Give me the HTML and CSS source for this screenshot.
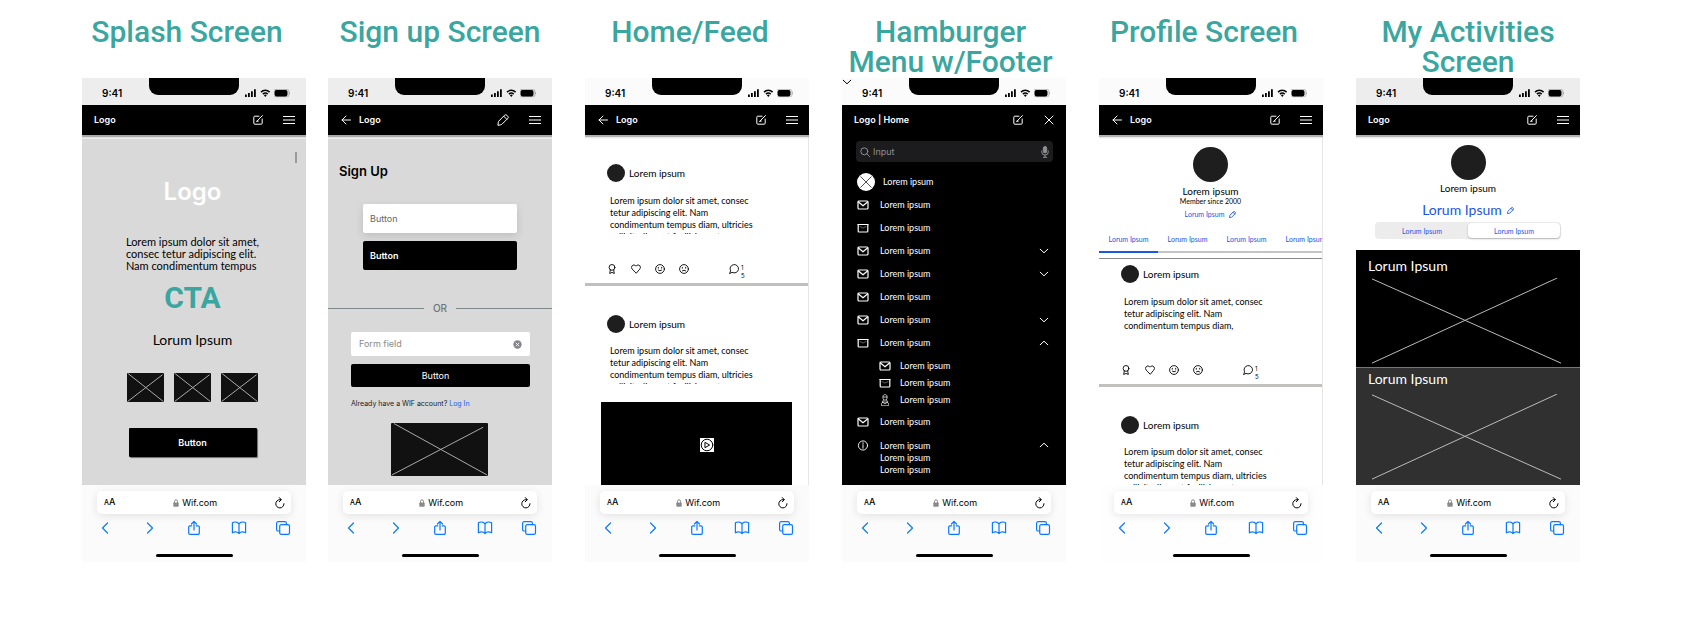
FILE: index.html
```html
<!DOCTYPE html>
<html lang="en">
<head>
<meta charset="utf-8">
<meta name="viewport" content="width=device-width, initial-scale=1">
<title>Wif.com screens</title>
<link rel="stylesheet" href="styles.css">
</head>
<body>
<svg class="sprite" aria-hidden="true">
  <symbol id="i-status" viewBox="0 0 45 10">
    <path fill="currentColor" d="M0 6.5h1.8V9H0zM3 5h1.8v4H3zM6 3.2h1.8V9H6zM9 1.2h1.8V9H9z"/>
    <path fill="none" stroke="currentColor" stroke-width="1.5" d="M16 4.1a6.2 6.2 0 0 1 8.6 0M17.9 6.1a3.5 3.5 0 0 1 4.8 0"/>
    <path fill="currentColor" d="M18.9 7.3a2 2 0 0 1 2.8 0L20.3 9z"/>
    <rect x="29.5" y="2" width="13" height="6.4" rx="1.8" fill="currentColor"/>
    <path fill="none" stroke="currentColor" stroke-opacity=".4" stroke-width=".6" d="M29.3 1.5h13a1.6 1.6 0 0 1 1.6 1.6v4a1.6 1.6 0 0 1-1.6 1.6h-13M44.5 4.3v1.8"/>
  </symbol>
  <symbol id="i-edit" viewBox="0 0 10 10"><path d="M6 1.2H1.8a1 1 0 0 0-1 1v6a1 1 0 0 0 1 1h6.400a1 1 0 0 0 1-1V4M3.800 6.300L9.400.6M3.800 6.300l1.500-.2"/></symbol>
  <symbol id="i-pencil" viewBox="0 0 12 12"><path d="M1 11l.3-2.800a2 2 0 0 1 .6-1.200L7.500 1.300a1.700 1.700 0 0 1 2.400 0l.8.8a1.700 1.700 0 0 1 0 2.400L5 10.200a2 2 0 0 1-1.200.6zM6.700 2.200l3.100 3.100"/></symbol>
  <symbol id="i-menu" viewBox="0 0 12 10"><path d="M0 1.500h12M0 5h12M0 8.500h12"/></symbol>
  <symbol id="i-close" viewBox="0 0 10 10"><path d="M1 1l8 8M9 1L1 9"/></symbol>
  <symbol id="i-arrow" viewBox="0 0 10 10"><path d="M9.500 5H1M5 1L1 5l4 4"/></symbol>
  <symbol id="i-down" viewBox="0 0 10 10"><path d="M1.200 3.200L5 6.800l3.800-3.600"/></symbol>
  <symbol id="i-up" viewBox="0 0 10 10"><path d="M1.200 6.800L5 3.200l3.800 3.600"/></symbol>
  <symbol id="i-mail" viewBox="0 0 12 10"><rect x="1" y="1" width="10" height="8" rx="1"/><path d="M1.500 2L6 5.800 10.500 2"/></symbol>
  <symbol id="i-box" viewBox="0 0 12 10"><path d="M.8 1.500h10.400M1.200 2v6.200a.8.8 0 0 0 .8.8h8a.8.8 0 0 0 .8-.8V2"/><path stroke-opacity=".3" d="M3 3.500L6 5l3-1.500"/></symbol>
  <symbol id="i-person" viewBox="0 0 10 12"><path d="M3 2.200C3 1.300 3.900.6 5 .6s2 .7 2 1.600v2C7 5.300 6.100 6.200 5 6.200S3 5.300 3 4.200zM3 3h4M3.600 5.800L2.500 8M6.400 5.800L7.500 8M2.500 8l5 .2M1.500 11.400C1 9.500 2 8.500 3 8.300L5 10l2-1.700c1 .2 2 1.200 1.500 3.100z"/></symbol>
  <symbol id="i-info" viewBox="0 0 12 12"><circle cx="6" cy="6" r="5"/><path d="M6 5.300V9M6 3v1.200"/></symbol>
  <symbol id="i-search" viewBox="0 0 10 10"><circle cx="4.300" cy="4.300" r="3.500"/><path d="M6.900 6.900l2.700 2.700"/></symbol>
  <symbol id="i-mic" viewBox="0 0 8 12"><rect x="2.300" y=".5" width="3.400" height="6.500" rx="1.700" fill="currentColor"/><path d="M.7 5v.8a3.300 3.300 0 0 0 6.600 0V5M4 9.200v2M2.300 11.300h3.400"/></symbol>
  <symbol id="i-award" viewBox="0 0 10 10"><circle cx="5" cy="3.400" r="2.900"/><path d="M3.300 5.900L2.700 9.500 5 8.400l2.300 1.100-.6-3.600"/></symbol>
  <symbol id="i-heart" viewBox="0 0 10 10"><path d="M5 9L1.200 5.100a2.400 2.400 0 0 1 0-3.400 2.400 2.400 0 0 1 3.400 0L5 2.100l.4-.4a2.400 2.400 0 0 1 3.400 0 2.400 2.400 0 0 1 0 3.400z"/></symbol>
  <symbol id="i-smile" viewBox="0 0 10 10"><circle cx="5" cy="5" r="4.400"/><path d="M3.200 6a2.300 2.300 0 0 0 3.600 0M3.300 3.300v.9M6.700 3.300v.9"/></symbol>
  <symbol id="i-frown" viewBox="0 0 10 10"><circle cx="5" cy="5" r="4.400"/><path d="M3.200 7a2.300 2.300 0 0 1 3.600 0M3.300 3.300v.9M6.700 3.300v.9"/></symbol>
  <symbol id="i-chat" viewBox="0 0 10 10"><path d="M.7 9.300l.9-2.500a4.200 4.200 0 1 1 1.700 1.700z"/></symbol>
  <symbol id="i-play" viewBox="0 0 14 14"><circle cx="7" cy="7" r="5.800"/><path d="M5.300 4.500L9.600 7 5.300 9.500z"/></symbol>
  <symbol id="i-lock" viewBox="0 0 6 8"><rect x=".3" y="3.500" width="5.400" height="4.300" rx=".8" fill="currentColor" stroke="none"/><path d="M1.500 3.800V2.300a1.500 1.500 0 0 1 3 0v1.500"/></symbol>
  <symbol id="i-reload" viewBox="0 0 10 12"><path d="M9 6.700A4.100 4.100 0 1 1 5 2.700h1M4.300.6l2 2.100-2 2.100"/></symbol>
  <symbol id="i-back" viewBox="0 0 16 16"><path d="M10.500 3L5.500 8l5 5"/></symbol>
  <symbol id="i-forward" viewBox="0 0 16 16"><path d="M5.500 3l5 5-5 5"/></symbol>
  <symbol id="i-share" viewBox="0 0 16 16"><path d="M5.800 5.800H4a1.300 1.300 0 0 0-1.300 1.300v6A1.300 1.300 0 0 0 4 14.400h8a1.300 1.300 0 0 0 1.300-1.300v-6A1.300 1.300 0 0 0 12 5.800h-1.800M8 10V1.600M5.400 4L8 1.400 10.600 4"/></symbol>
  <symbol id="i-book" viewBox="0 0 16 16"><path d="M8 3.800C6.500 2 3.500 1.700 1.400 2.800v10c2.100-1 5.100-.9 6.600.7 1.500-1.600 4.500-1.700 6.600-.7v-10C12.500 1.700 9.500 2 8 3.800zM8 3.800v9.700"/></symbol>
  <symbol id="i-tabs" viewBox="0 0 16 16"><rect x="4.700" y="4.700" width="9.800" height="9.600" rx="1.600"/><path d="M4.700 11H3.200a1.600 1.600 0 0 1-1.600-1.600V3.200a1.600 1.600 0 0 1 1.600-1.600h6.600a1.600 1.600 0 0 1 1.600 1.600v1.500"/></symbol>
  <symbol id="i-clear" viewBox="0 0 10 10"><circle cx="5" cy="5" r="4.600" fill="currentColor" stroke="none"/><path stroke="#fff" d="M3.400 3.400l3.200 3.200M6.600 3.400L3.400 6.600"/></symbol>
</svg>

<main class="board">

  <section class="screen screen--first">
    <h1 class="screen__title screen__title--left">Splash Screen</h1>
    <div class="phone">
      <div class="status status--gray"><span>9:41</span><i class="notch"></i><svg class="status__icons"><use href="#i-status"/></svg></div>
      <header class="nav">
        <span class="nav__name">Logo</span>
        <button class="icon-btn" aria-label="Compose"><svg class="icon"><use href="#i-edit"/></svg></button>
        <button class="icon-btn" aria-label="Menu"><svg class="icon icon--menu"><use href="#i-menu"/></svg></button>
      </header>
      <div class="view view--gray splash">
        <i class="scrollbar"></i>
        <p class="splash__logo">Logo</p>
        <p class="splash__text hand">Lorem ipsum dolor sit amet,<br>consec tetur adipiscing elit.<br>Nam condimentum tempus</p>
        <p class="splash__cta">CTA</p>
        <p class="splash__sub hand">Lorum Ipsum</p>
        <div class="splash__pics">
          <svg class="pic" viewBox="0 0 100 100" preserveAspectRatio="none"><path d="M3 2L98 98M2 98L96 6"/></svg>
          <svg class="pic" viewBox="0 0 100 100" preserveAspectRatio="none"><path d="M3 2L98 98M2 98L96 6"/></svg>
          <svg class="pic" viewBox="0 0 100 100" preserveAspectRatio="none"><path d="M3 2L98 98M2 98L96 6"/></svg>
        </div>
        <button class="btn btn--square">Button</button>
      </div>
      <footer class="browser">
        <div class="address"><button class="address__aa" aria-label="Text size"><small>A</small>A</button><span class="address__url"><svg class="icon icon--lock"><use href="#i-lock"/></svg>Wif.com</span><button class="icon-btn" aria-label="Reload"><svg class="icon icon--reload"><use href="#i-reload"/></svg></button></div>
        <div class="tools"><button class="icon-btn" aria-label="Back"><svg class="icon icon--tool"><use href="#i-back"/></svg></button><button class="icon-btn" aria-label="Forward"><svg class="icon icon--tool"><use href="#i-forward"/></svg></button><button class="icon-btn" aria-label="Share"><svg class="icon icon--tool"><use href="#i-share"/></svg></button><button class="icon-btn" aria-label="Bookmarks"><svg class="icon icon--tool"><use href="#i-book"/></svg></button><button class="icon-btn" aria-label="Tabs"><svg class="icon icon--tool"><use href="#i-tabs"/></svg></button></div>
        <i class="home-bar"></i>
      </footer>
    </div>
  </section>

  <section class="screen">
    <h1 class="screen__title">Sign up Screen</h1>
    <div class="phone">
      <div class="status status--gray"><span>9:41</span><i class="notch"></i><svg class="status__icons"><use href="#i-status"/></svg></div>
      <header class="nav">
        <button class="icon-btn nav__back" aria-label="Go back"><svg class="icon"><use href="#i-arrow"/></svg></button>
        <span class="nav__name">Logo</span>
        <button class="icon-btn" aria-label="Edit"><svg class="icon icon--pencil"><use href="#i-pencil"/></svg></button>
        <button class="icon-btn" aria-label="Menu"><svg class="icon icon--menu"><use href="#i-menu"/></svg></button>
      </header>
      <div class="view view--gray signup">
        <h2 class="signup__title">Sign Up</h2>
        <div class="signup__choices">
          <button class="btn btn--left btn--light">Button</button>
          <button class="btn btn--left">Button</button>
        </div>
        <div class="or"><span>OR</span></div>
        <form class="signup__form">
          <div class="field"><input type="text" placeholder="Form field" aria-label="Form field"><button type="button" class="icon-btn" aria-label="Clear"><svg class="icon icon--clear"><use href="#i-clear"/></svg></button></div>
          <button type="button" class="btn btn--wide">Button</button>
          <p class="signup__note">Already have a WIF account? <a href="#login">Log In</a></p>
        </form>
        <svg class="pic pic--large" viewBox="0 0 100 100" preserveAspectRatio="none"><path d="M3 1L99 98M1 98L95 8"/></svg>
      </div>
      <footer class="browser">
        <div class="address"><button class="address__aa" aria-label="Text size"><small>A</small>A</button><span class="address__url"><svg class="icon icon--lock"><use href="#i-lock"/></svg>Wif.com</span><button class="icon-btn" aria-label="Reload"><svg class="icon icon--reload"><use href="#i-reload"/></svg></button></div>
        <div class="tools"><button class="icon-btn" aria-label="Back"><svg class="icon icon--tool"><use href="#i-back"/></svg></button><button class="icon-btn" aria-label="Forward"><svg class="icon icon--tool"><use href="#i-forward"/></svg></button><button class="icon-btn" aria-label="Share"><svg class="icon icon--tool"><use href="#i-share"/></svg></button><button class="icon-btn" aria-label="Bookmarks"><svg class="icon icon--tool"><use href="#i-book"/></svg></button><button class="icon-btn" aria-label="Tabs"><svg class="icon icon--tool"><use href="#i-tabs"/></svg></button></div>
        <i class="home-bar"></i>
      </footer>
    </div>
  </section>

  <section class="screen">
    <h1 class="screen__title screen__title--left">Home/Feed</h1>
    <div class="phone">
      <div class="status"><span>9:41</span><i class="notch"></i><svg class="status__icons"><use href="#i-status"/></svg></div>
      <header class="nav">
        <button class="icon-btn nav__back" aria-label="Go back"><svg class="icon"><use href="#i-arrow"/></svg></button>
        <span class="nav__name">Logo</span>
        <button class="icon-btn" aria-label="Compose"><svg class="icon"><use href="#i-edit"/></svg></button>
        <button class="icon-btn" aria-label="Menu"><svg class="icon icon--menu"><use href="#i-menu"/></svg></button>
      </header>
      <div class="view view--edge hand">
        <article class="post post--roomy">
          <div class="post__author"><i class="avatar"></i>Lorem ipsum</div>
          <p class="post__text">Lorem ipsum dolor sit amet, consec<br>tetur adipiscing elit. Nam<br>condimentum tempus diam, ultricies<br>sollicitudin erat facilisis eget</p>
          <div class="reactions">
            <button class="icon-btn" aria-label="Award"><svg class="icon"><use href="#i-award"/></svg></button>
            <button class="icon-btn" aria-label="Love"><svg class="icon"><use href="#i-heart"/></svg></button>
            <button class="icon-btn" aria-label="Happy"><svg class="icon"><use href="#i-smile"/></svg></button>
            <button class="icon-btn" aria-label="Sad"><svg class="icon"><use href="#i-frown"/></svg></button>
            <button class="icon-btn reactions__chat" aria-label="Comments"><svg class="icon"><use href="#i-chat"/></svg></button>
            <span class="reactions__count">1<br>5</span>
          </div>
        </article>
        <article class="post post--next">
          <div class="post__author"><i class="avatar"></i>Lorem ipsum</div>
          <p class="post__text">Lorem ipsum dolor sit amet, consec<br>tetur adipiscing elit. Nam<br>condimentum tempus diam, ultricies<br>sollicitudin erat facilisis eget</p>
        </article>
        <div class="video"><button class="video__play" aria-label="Play"><svg class="icon icon--play"><use href="#i-play"/></svg></button></div>
      </div>
      <footer class="browser">
        <div class="address"><button class="address__aa" aria-label="Text size"><small>A</small>A</button><span class="address__url"><svg class="icon icon--lock"><use href="#i-lock"/></svg>Wif.com</span><button class="icon-btn" aria-label="Reload"><svg class="icon icon--reload"><use href="#i-reload"/></svg></button></div>
        <div class="tools"><button class="icon-btn" aria-label="Back"><svg class="icon icon--tool"><use href="#i-back"/></svg></button><button class="icon-btn" aria-label="Forward"><svg class="icon icon--tool"><use href="#i-forward"/></svg></button><button class="icon-btn" aria-label="Share"><svg class="icon icon--tool"><use href="#i-share"/></svg></button><button class="icon-btn" aria-label="Bookmarks"><svg class="icon icon--tool"><use href="#i-book"/></svg></button><button class="icon-btn" aria-label="Tabs"><svg class="icon icon--tool"><use href="#i-tabs"/></svg></button></div>
        <i class="home-bar"></i>
      </footer>
    </div>
  </section>

  <section class="screen">
    <h1 class="screen__title screen__title--wide">Hamburger<br>Menu w/Footer</h1>
    <div class="phone">
      <div class="status"><svg class="icon status__corner"><use href="#i-down"/></svg><span>9:41</span><i class="notch"></i><svg class="status__icons"><use href="#i-status"/></svg></div>
      <header class="nav nav--flat">
        <span class="nav__name">Logo | Home</span>
        <button class="icon-btn" aria-label="Compose"><svg class="icon"><use href="#i-edit"/></svg></button>
        <button class="icon-btn" aria-label="Close"><svg class="icon icon--menu"><use href="#i-close"/></svg></button>
      </header>
      <div class="view view--black menu">
        <div class="search"><svg class="icon"><use href="#i-search"/></svg><input type="text" placeholder="Input" aria-label="Search"><button class="icon-btn" aria-label="Dictate"><svg class="icon icon--mic"><use href="#i-mic"/></svg></button></div>
        <ul class="menu__list hand">
          <li class="menu__row menu__row--user"><svg class="menu__avatar" viewBox="0 0 18 18"><circle cx="9" cy="9" r="9" fill="#fff"/><path d="M3.500 3.500l11 11M14.500 3.500l-11 11" stroke="#222" stroke-width=".8"/></svg><a href="#user">Lorem ipsum</a></li>
          <li class="menu__row"><svg class="icon icon--item"><use href="#i-mail"/></svg><a href="#m1">Lorem ipsum</a></li>
          <li class="menu__row"><svg class="icon icon--item"><use href="#i-box"/></svg><a href="#m2">Lorem ipsum</a></li>
          <li class="menu__row"><svg class="icon icon--item"><use href="#i-mail"/></svg><a href="#m3">Lorem ipsum</a><button class="icon-btn" aria-label="Expand"><svg class="icon"><use href="#i-down"/></svg></button></li>
          <li class="menu__row"><svg class="icon icon--item"><use href="#i-mail"/></svg><a href="#m4">Lorem ipsum</a><button class="icon-btn" aria-label="Expand"><svg class="icon"><use href="#i-down"/></svg></button></li>
          <li class="menu__row"><svg class="icon icon--item"><use href="#i-mail"/></svg><a href="#m5">Lorem ipsum</a></li>
          <li class="menu__row"><svg class="icon icon--item"><use href="#i-mail"/></svg><a href="#m6">Lorem ipsum</a><button class="icon-btn" aria-label="Expand"><svg class="icon"><use href="#i-down"/></svg></button></li>
          <li class="menu__row"><svg class="icon icon--item"><use href="#i-box"/></svg><a href="#m7">Lorem ipsum</a><button class="icon-btn" aria-label="Collapse"><svg class="icon"><use href="#i-up"/></svg></button></li>
          <li>
            <ul class="submenu">
              <li><svg class="icon icon--item"><use href="#i-mail"/></svg><a href="#s1">Lorem ipsum</a></li>
              <li><svg class="icon icon--item"><use href="#i-box"/></svg><a href="#s2">Lorem ipsum</a></li>
              <li><svg class="icon icon--item icon--person"><use href="#i-person"/></svg><a href="#s3">Lorem ipsum</a></li>
            </ul>
          </li>
          <li class="menu__row"><svg class="icon icon--item"><use href="#i-mail"/></svg><a href="#m8">Lorem ipsum</a></li>
          <li class="menu__row menu__row--last"><svg class="icon icon--item icon--info"><use href="#i-info"/></svg><a href="#m9">Lorem ipsum<br>Lorem ipsum<br>Lorem ipsum</a><button class="icon-btn" aria-label="Collapse"><svg class="icon"><use href="#i-up"/></svg></button></li>
        </ul>
      </div>
      <footer class="browser">
        <div class="address"><button class="address__aa" aria-label="Text size"><small>A</small>A</button><span class="address__url"><svg class="icon icon--lock"><use href="#i-lock"/></svg>Wif.com</span><button class="icon-btn" aria-label="Reload"><svg class="icon icon--reload"><use href="#i-reload"/></svg></button></div>
        <div class="tools"><button class="icon-btn" aria-label="Back"><svg class="icon icon--tool"><use href="#i-back"/></svg></button><button class="icon-btn" aria-label="Forward"><svg class="icon icon--tool"><use href="#i-forward"/></svg></button><button class="icon-btn" aria-label="Share"><svg class="icon icon--tool"><use href="#i-share"/></svg></button><button class="icon-btn" aria-label="Bookmarks"><svg class="icon icon--tool"><use href="#i-book"/></svg></button><button class="icon-btn" aria-label="Tabs"><svg class="icon icon--tool"><use href="#i-tabs"/></svg></button></div>
        <i class="home-bar"></i>
      </footer>
    </div>
  </section>

  <section class="screen">
    <h1 class="screen__title screen__title--left">Profile Screen</h1>
    <div class="phone">
      <div class="status"><span>9:41</span><i class="notch"></i><svg class="status__icons"><use href="#i-status"/></svg></div>
      <header class="nav">
        <button class="icon-btn nav__back" aria-label="Go back"><svg class="icon"><use href="#i-arrow"/></svg></button>
        <span class="nav__name">Logo</span>
        <button class="icon-btn" aria-label="Compose"><svg class="icon"><use href="#i-edit"/></svg></button>
        <button class="icon-btn" aria-label="Menu"><svg class="icon icon--menu"><use href="#i-menu"/></svg></button>
      </header>
      <div class="view view--edge hand">
        <div class="person">
          <i class="avatar avatar--large"></i>
          <p class="person__name">Lorem ipsum</p>
          <p class="person__since">Member since 2000</p>
          <a class="person__link" href="#edit">Lorum Ipsum<svg class="icon icon--small"><use href="#i-pencil"/></svg></a>
        </div>
        <nav class="tabs"><a class="tabs__item tabs__item--on" href="#t1">Lorum Ipsum</a><a class="tabs__item" href="#t2">Lorum Ipsum</a><a class="tabs__item" href="#t3">Lorum Ipsum</a><a class="tabs__item" href="#t4">Lorum Ipsum</a></nav>
        <article class="post post--ruled">
          <div class="post__author"><i class="avatar"></i>Lorem ipsum</div>
          <p class="post__text">Lorem ipsum dolor sit amet, consec<br>tetur adipiscing elit. Nam<br>condimentum tempus diam,</p>
          <div class="reactions">
            <button class="icon-btn" aria-label="Award"><svg class="icon"><use href="#i-award"/></svg></button>
            <button class="icon-btn" aria-label="Love"><svg class="icon"><use href="#i-heart"/></svg></button>
            <button class="icon-btn" aria-label="Happy"><svg class="icon"><use href="#i-smile"/></svg></button>
            <button class="icon-btn" aria-label="Sad"><svg class="icon"><use href="#i-frown"/></svg></button>
            <button class="icon-btn reactions__chat" aria-label="Comments"><svg class="icon"><use href="#i-chat"/></svg></button>
            <span class="reactions__count">1<br>5</span>
          </div>
        </article>
        <article class="post post--next">
          <div class="post__author"><i class="avatar"></i>Lorem ipsum</div>
          <p class="post__text">Lorem ipsum dolor sit amet, consec<br>tetur adipiscing elit. Nam<br>condimentum tempus diam, ultricies<br>sollicitudin erat facilisis eget</p>
        </article>
      </div>
      <footer class="browser browser--white">
        <div class="address"><button class="address__aa" aria-label="Text size"><small>A</small>A</button><span class="address__url"><svg class="icon icon--lock"><use href="#i-lock"/></svg>Wif.com</span><button class="icon-btn" aria-label="Reload"><svg class="icon icon--reload"><use href="#i-reload"/></svg></button></div>
        <div class="tools"><button class="icon-btn" aria-label="Back"><svg class="icon icon--tool"><use href="#i-back"/></svg></button><button class="icon-btn" aria-label="Forward"><svg class="icon icon--tool"><use href="#i-forward"/></svg></button><button class="icon-btn" aria-label="Share"><svg class="icon icon--tool"><use href="#i-share"/></svg></button><button class="icon-btn" aria-label="Bookmarks"><svg class="icon icon--tool"><use href="#i-book"/></svg></button><button class="icon-btn" aria-label="Tabs"><svg class="icon icon--tool"><use href="#i-tabs"/></svg></button></div>
        <i class="home-bar"></i>
      </footer>
    </div>
  </section>

  <section class="screen">
    <h1 class="screen__title">My Activities<br>Screen</h1>
    <div class="phone">
      <div class="status status--gray"><span>9:41</span><i class="notch"></i><svg class="status__icons"><use href="#i-status"/></svg></div>
      <header class="nav">
        <span class="nav__name">Logo</span>
        <button class="icon-btn" aria-label="Compose"><svg class="icon"><use href="#i-edit"/></svg></button>
        <button class="icon-btn" aria-label="Menu"><svg class="icon icon--menu"><use href="#i-menu"/></svg></button>
      </header>
      <div class="view hand">
        <div class="person person--compact">
          <i class="avatar avatar--large"></i>
          <p class="person__name">Lorem ipsum</p>
          <a class="person__link person__link--large" href="#edit">Lorum Ipsum<svg class="icon icon--small"><use href="#i-pencil"/></svg></a>
        </div>
        <div class="segments"><button class="segments__item">Lorum Ipsum</button><button class="segments__item segments__item--on">Lorum Ipsum</button></div>
        <div class="tile">
          <h2 class="tile__title">Lorum Ipsum</h2>
          <svg class="tile__cross" viewBox="0 0 100 100" preserveAspectRatio="none"><path d="M0 1L100 99M0 99L98 0"/></svg>
        </div>
        <div class="tile tile--gray">
          <h2 class="tile__title">Lorum Ipsum</h2>
          <svg class="tile__cross" viewBox="0 0 100 100" preserveAspectRatio="none"><path d="M0 1L100 99M0 99L98 0"/></svg>
        </div>
      </div>
      <footer class="browser">
        <div class="address"><button class="address__aa" aria-label="Text size"><small>A</small>A</button><span class="address__url"><svg class="icon icon--lock"><use href="#i-lock"/></svg>Wif.com</span><button class="icon-btn" aria-label="Reload"><svg class="icon icon--reload"><use href="#i-reload"/></svg></button></div>
        <div class="tools"><button class="icon-btn" aria-label="Back"><svg class="icon icon--tool"><use href="#i-back"/></svg></button><button class="icon-btn" aria-label="Forward"><svg class="icon icon--tool"><use href="#i-forward"/></svg></button><button class="icon-btn" aria-label="Share"><svg class="icon icon--tool"><use href="#i-share"/></svg></button><button class="icon-btn" aria-label="Bookmarks"><svg class="icon icon--tool"><use href="#i-book"/></svg></button><button class="icon-btn" aria-label="Tabs"><svg class="icon icon--tool"><use href="#i-tabs"/></svg></button></div>
        <i class="home-bar"></i>
      </footer>
    </div>
  </section>

</main>
</body>
</html>
```
FILE: styles.css
```css
* { box-sizing: border-box; margin: 0; padding: 0; }

body {
  background: #fff;
  color: #000;
  font: 9px/12px Inter, "Liberation Sans", sans-serif;
}

button, input { font: inherit; color: inherit; background: none; border: 0; }
a { color: inherit; text-decoration: none; }
ul { list-style: none; }
.sprite { position: absolute; width: 0; height: 0; }
.hand { font-family: Lato, "Open Sans", sans-serif; }

.icon {
  display: block;
  flex: none;
  width: 10px;
  height: 10px;
  fill: none;
  stroke: currentColor;
  stroke-linecap: round;
  stroke-linejoin: round;
}
.icon-btn { display: flex; align-items: center; justify-content: center; }
.icon--menu { width: 12px; }
.icon--pencil { width: 12px; height: 12px; }
.icon--small { width: 7px; height: 7px; stroke-width: 1.5; }
.icon--lock { width: 6px; height: 8px; color: #8a8a8e; }
.icon--reload { width: 10px; height: 12px; }
.icon--tool { width: 16px; height: 16px; stroke-width: 1.2; }
.icon--clear { width: 9px; height: 9px; color: #85858b; }
.icon--mic { width: 8px; height: 12px; }
.icon--play { width: 14px; height: 14px; }

/* Board */
.board { display: flex; gap: 33px; padding: 17px 106px 17px 82px; }
.screen { flex: 1; min-width: 0; display: flex; flex-direction: column; }
.screen--first { margin-right: -11px; }
.screen__title {
  min-height: 61px;
  color: #3aa6a0;
  font: 500 30px/30px Roboto, sans-serif;
  text-align: center;
  white-space: nowrap;
}
.screen__title--left { padding-right: 14px; }
.screen__title--wide { padding-right: 7px; }
.phone { flex: 1; display: flex; flex-direction: column; overflow: hidden; }

/* Status bar */
.status {
  position: relative;
  display: flex;
  justify-content: space-between;
  align-items: center;
  height: 27px;
  padding: 3px 16px 0 20px;
  background: #fbfbfb;
  font-size: 10px;
  font-weight: 600;
}
.status--gray { background: #ededed; }
.status__icons { width: 45px; height: 10px; }
.status__corner { position: absolute; left: 0; top: -1px; }
.notch {
  position: absolute;
  top: 0;
  left: 50%;
  width: 90px;
  height: 17px;
  margin-left: -45px;
  border-radius: 0 0 9px 9px;
  background: #000;
}

/* App bar */
.nav {
  position: relative;
  z-index: 1;
  display: flex;
  align-items: center;
  gap: 20px;
  height: 30px;
  padding: 0 11px 0 12px;
  background: #000;
  color: #fff;
  font-weight: 600;
  box-shadow: 0 2px 1px rgba(0, 0, 0, .28);
}
.nav--flat { box-shadow: none; }
.nav__name { flex: 1; }
.nav__back { margin: 0 -12px 0 1px; }

.view { position: relative; flex: 1; border-top: 4px solid #f6f5f5; background: #fff; }
.view--gray { border-top-color: #ececec; background: #d9d9d9; }
.view--black { border-top: 0; background: #000; color: #fff; }
.view--edge { border-right: 1px solid #e6e6e6; }

/* Buttons and image placeholders */
.btn {
  height: 29px;
  border-radius: 2px;
  background: #000;
  color: #fff;
  font-weight: 600;
  text-align: center;
}
.btn--square { width: 128px; border-radius: 1px; box-shadow: 1px 1px 1px rgba(0, 0, 0, .5); }
.btn--left { width: 100%; padding-left: 7px; text-align: left; }
.btn--light { background: #fff; color: #666; font-weight: 400; box-shadow: 0 3px 8px rgba(0, 0, 0, .12); }
.btn--wide { width: 100%; height: 23px; padding-right: 10px; font-weight: 400; }
.pic { width: 37px; height: 29px; background: #111; border-radius: 1px; fill: none; stroke: #aaa; }
.pic path, .tile__cross path { vector-effect: non-scaling-stroke; }
.pic--large { display: block; width: 97px; height: 53px; margin: 14px auto 0 63px; }

/* Splash */
.splash { display: flex; flex-direction: column; align-items: center; padding: 39px 3px 28px 0; }
.scrollbar { position: absolute; top: 13px; right: 9px; width: 2px; height: 11px; background: #9a9a9a; }
.splash__logo { color: #fff; font-size: 24px; line-height: 28px; font-weight: 600; }
.splash__text { margin-top: 30px; font-size: 11px; }
.splash__cta { margin-top: 11px; color: #3aa6a0; font: 700 30px/30px Roboto, sans-serif; }
.splash__sub { margin: 18px 0 24px; font-size: 14px; line-height: 18px; }
.splash__pics { display: flex; gap: 10px; margin-bottom: 26px; }

/* Sign up */
.signup { padding: 24px 0 9px; }
.signup__title { padding-left: 11px; font-size: 13px; line-height: 16px; font-weight: 600; }
.signup__choices { display: grid; gap: 8px; padding: 25px 35px 32px; }
.or { display: flex; align-items: center; gap: 9px; color: #6b777b; font-size: 10px; font-weight: 500; }
.or::before, .or::after { content: ""; flex: 1; height: 1px; background: #808a8d; }
.signup__form { padding: 18px 22px 0 23px; }
.field {
  display: flex;
  align-items: center;
  height: 24px;
  margin-bottom: 8px;
  padding: 0 8px;
  border-radius: 2px;
  background: #fff;
  color: #8a8a8a;
}
.field input, .search input { flex: 1; min-width: 0; outline: 0; }
::placeholder { color: inherit; opacity: 1; }
.signup__note { margin-top: 12px; font-size: 7px; line-height: 10px; color: #222; }
.signup__note a { color: #2460e8; }

/* Posts */
.post { padding: 6px 21px 3px 22px; border-bottom: 3px solid #c2bfbf; }
.post--roomy { padding-top: 25px; }
.post--ruled { margin-top: 5px; border-top: 1px solid #888; }
.post--next { padding-top: 29px; padding-bottom: 0; border-bottom: 0; }
.post__author { display: flex; align-items: center; gap: 4px; margin-bottom: 13px; font-size: 10px; }
.post--next .post__author { margin-bottom: 12px; }
.avatar { flex: none; width: 18px; height: 18px; border-radius: 50%; background: #1e1e1e; }
.avatar--large { width: 35px; height: 35px; }
.post__text { height: 39px; padding-left: 3px; overflow: hidden; white-space: nowrap; }
.reactions { display: flex; align-items: flex-start; gap: 14px; margin-top: 30px; }
.reactions .icon { stroke-width: .9; }
.reactions__chat { margin-left: 26px; }
.reactions__count { margin-left: -12px; font: 6px/8px Inter, sans-serif; }
.video { position: relative; height: 83px; margin: 18px 16px 0; background: #000; }
.video__play { position: absolute; left: 52%; top: 43%; background: #fff; color: #000; }

/* Menu */
.menu { padding: 6px 13px 9px 14px; }
.search {
  display: flex;
  align-items: center;
  gap: 3px;
  height: 21px;
  padding: 0 4px;
  border-radius: 4px;
  background: #1c1c1e;
  color: #8e8e93;
}
.menu__list { padding-top: 8px; }
.menu__row { display: flex; align-items: center; gap: 11px; height: 23px; padding: 0 4px 0 1px; }
.menu__row a { flex: 1; }
.menu__row--user { gap: 8px; }
.menu__row--last { align-items: flex-start; height: auto; padding-top: 7px; }
.menu__avatar { width: 18px; height: 18px; }
.icon--item { width: 12px; height: 10px; stroke-width: 1.2; }
.icon--info { height: 11px; stroke-width: 1; }
.submenu { padding: 3px 0 2px 23px; }
.submenu li { display: flex; align-items: center; gap: 9px; height: 17px; }
.icon--person { height: 12px; stroke-width: .7; }

/* Profile header */
.person { display: flex; flex-direction: column; align-items: center; padding: 8px 0 15px; }
.person__name { margin-top: 3px; font-size: 10px; }
.person__since { margin-bottom: 4px; font-size: 7px; line-height: 8px; }
.person__link { display: flex; align-items: center; gap: 5px; color: #1a56e8; font-size: 7px; line-height: 10px; }
.person__link--large { margin-top: 7px; font-size: 14px; line-height: 18px; }
.person--compact { padding: 6px 0 3px; }
.person--compact .person__name { margin-top: 2px; }
.tabs { display: flex; overflow: hidden; color: #1a56e8; font-size: 7px; line-height: 10px; }
.tabs__item {
  flex: none;
  width: 59px;
  padding-bottom: 7px;
  border-bottom: 2px solid #c4c4c4;
  text-align: center;
  white-space: nowrap;
}
.tabs__item--on { border-color: #1a56e8; }

/* Activities */
.segments { display: flex; height: 17px; margin: 0 19px 11px; padding: 1px; border-radius: 4px; background: #ececec; }
.segments__item { flex: 1; border-radius: 4px; color: #1a56e8; font-size: 7px; line-height: 10px; }
.segments__item--on { background: #fff; box-shadow: 0 1px 2px rgba(0, 0, 0, .25); }
.tile { padding: 7px 19px 3px 12px; background: #000; color: #fff; }
.tile--gray { padding-top: 2px; padding-bottom: 5px; border-top: 1px solid #777; background: #303030; }
.tile__title { margin-bottom: 3px; font-size: 14px; line-height: 18px; font-weight: 400; }
.tile--gray .tile__title { margin-bottom: 6px; }
.tile__cross { display: block; width: 100%; height: 86px; padding-left: 4px; fill: none; stroke: #bbb; }

/* Browser chrome */
.browser { position: relative; z-index: 1; padding: 6px 15px 5px; background: #fbfbfb; }
.browser--white { background: #fefefe; }
.address {
  display: flex;
  align-items: center;
  justify-content: space-between;
  height: 23px;
  padding: 0 6px 0 7px;
  border-radius: 5px;
  background: #fff;
  box-shadow: 0 2px 8px rgba(0, 0, 0, .1);
}
.address__aa { font-weight: 500; }
.address__aa small { font-size: 7px; }
.address__url { display: flex; align-items: center; gap: 3px; }
.tools { display: flex; justify-content: space-between; margin: 6px 0 18px; color: #0a7aff; }
.home-bar { display: block; width: 77px; height: 3px; margin: 0 auto; border-radius: 2px; background: #000; }
```
